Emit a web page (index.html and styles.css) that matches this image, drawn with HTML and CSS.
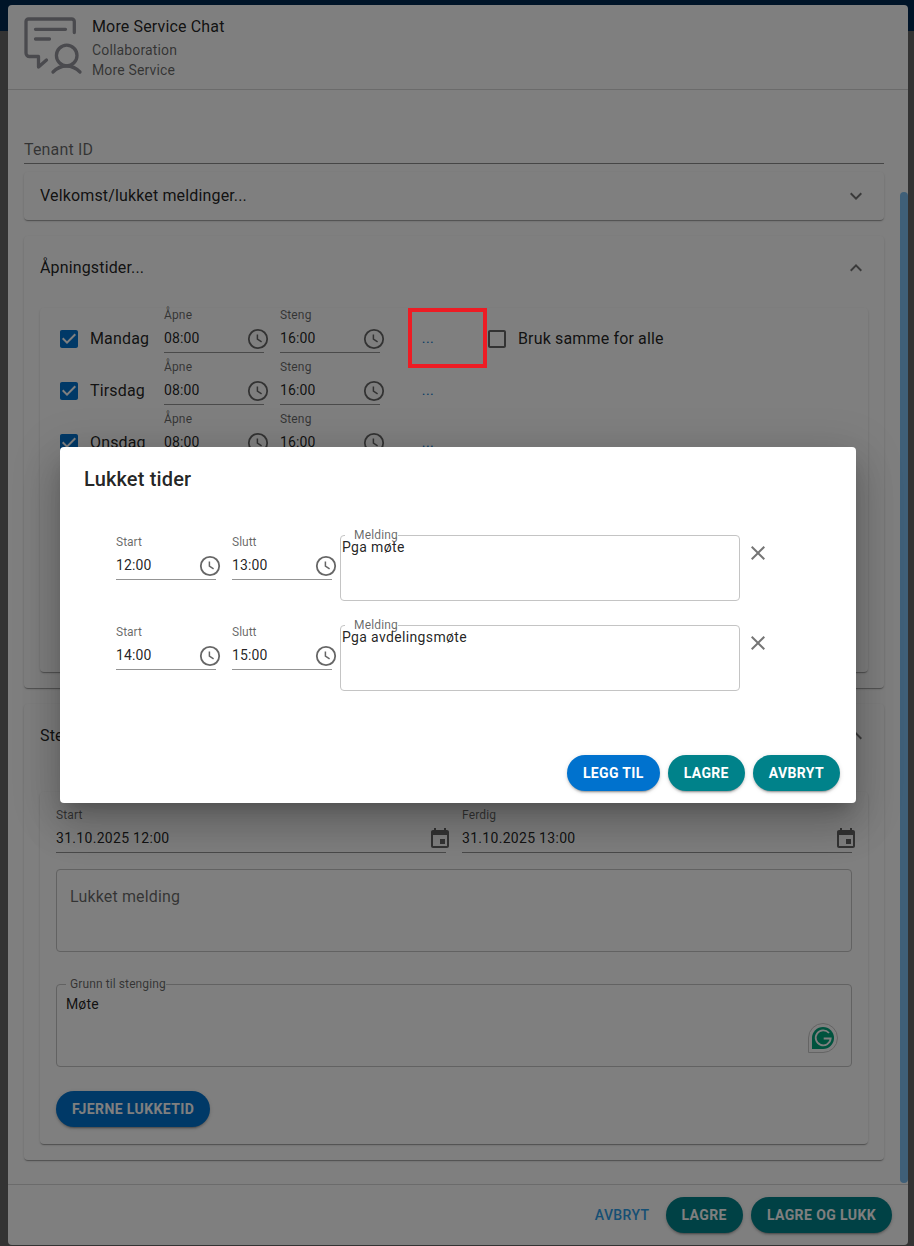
FILE: index.html
```html
<!DOCTYPE html>
<html lang="nb">
<head>
<meta charset="utf-8">
<title>More Service Chat</title>
<link rel="stylesheet" href="styles.css">
</head>
<body>
<svg class="defs" width="0" height="0" aria-hidden="true">
  <symbol id="clock" viewBox="0 0 24 24"><circle cx="12" cy="12" r="9.2" fill="none" stroke="currentColor" stroke-width="1.8"/><path d="M11.4 7.600v4.600l4.200 2.700" fill="none" stroke="currentColor" stroke-width="1.500"/></symbol>
  <symbol id="event" viewBox="0 0 24 24"><path fill="currentColor" d="M17 12h-5v5h5v-5zM16 1v2H8V1H6v2H5c-1.11 0-1.99.9-1.99 2L3 19c0 1.1.89 2 2 2h14c1.1 0 2-.9 2-2V5c0-1.1-.9-2-2-2h-1V1h-2zm3 18H5V8h14v11z"/></symbol>
  <symbol id="checked" viewBox="0 0 24 24"><path fill="currentColor" d="M19 3H5c-1.11 0-2 .9-2 2v14c0 1.1.89 2 2 2h14c1.11 0 2-.9 2-2V5c0-1.1-.89-2-2-2zm-9 14l-5-5 1.41-1.41L10 14.17l7.59-7.59L19 8l-9 9z"/></symbol>
  <symbol id="unchecked" viewBox="0 0 24 24"><path fill="currentColor" d="M19 5v14H5V5h14m0-2H5c-1.1 0-2 .9-2 2v14c0 1.1.9 2 2 2h14c1.1 0 2-.9 2-2V5c0-1.1-.9-2-2-2z"/></symbol>
  <symbol id="more" viewBox="0 0 24 24"><path fill="currentColor" d="M16.59 8.59 12 13.17 7.41 8.59 6 10l6 6 6-6z"/></symbol>
  <symbol id="less" viewBox="0 0 24 24"><path fill="currentColor" d="M12 8l-6 6 1.41 1.41L12 10.83l4.59 4.58L18 14z"/></symbol>
  <symbol id="close" viewBox="0 0 24 24"><path fill="currentColor" d="M19 6.41 17.59 5 12 10.59 6.41 5 5 6.41 10.59 12 5 17.59 6.41 19 12 13.41 17.59 19 19 17.59 13.41 12z"/></symbol>
</svg>

<div class="topbar"></div>

<section class="window">
  <header class="win-head">
    <svg class="logo" width="60" height="60" viewBox="0 0 60 60" fill="none" stroke="currentColor" stroke-width="3.300" stroke-linecap="round" stroke-linejoin="round">
      <path d="M51.300 16.500V5.500a2.500 2.500 0 0 0-2.500-2.500H5.500A2.500 2.500 0 0 0 3 5.500V37a3.500 3.500 0 0 0 3.500 3.500h9V51l8-7"/>
      <path d="M12.500 13.300h30M12.500 23h14"/>
      <circle cx="43.700" cy="39.500" r="10.300"/>
      <path d="M30 56c8-8 19-8 27 0"/>
    </svg>
    <div class="head-text">
      <div class="head-title">More Service Chat</div>
      <div class="head-sub">Collaboration</div>
      <div class="head-sub">More Service</div>
    </div>
  </header>

  <div class="win-body">
    <div class="tenant">Tenant ID</div>

    <div class="acc acc-closed">
      <span class="acc-title">Velkomst/lukket meldinger...</span>
      <svg class="chev"><use href="#more"/></svg>
    </div>

    <div class="acc acc-open">
      <div class="acc-head">
        <span class="acc-title">Åpningstider...</span>
        <svg class="chev"><use href="#less"/></svg>
      </div>
      <div class="card days">
        <div class="day">
          <svg class="box on"><use href="#checked"/></svg>
          <span class="day-name">Mandag</span>
          <div class="field time"><label class="f-label">Åpne</label><div class="f-input"><span class="f-value">08:00</span><svg class="f-icon"><use href="#clock"/></svg></div></div>
          <div class="field time"><label class="f-label">Steng</label><div class="f-input"><span class="f-value">16:00</span><svg class="f-icon"><use href="#clock"/></svg></div></div>
          <button class="dots">...</button>
          <svg class="box off"><use href="#unchecked"/></svg>
          <span class="same">Bruk samme for alle</span>
        </div>
        <div class="day">
          <svg class="box on"><use href="#checked"/></svg>
          <span class="day-name">Tirsdag</span>
          <div class="field time"><label class="f-label">Åpne</label><div class="f-input"><span class="f-value">08:00</span><svg class="f-icon"><use href="#clock"/></svg></div></div>
          <div class="field time"><label class="f-label">Steng</label><div class="f-input"><span class="f-value">16:00</span><svg class="f-icon"><use href="#clock"/></svg></div></div>
          <button class="dots">...</button>
        </div>
        <div class="day">
          <svg class="box on"><use href="#checked"/></svg>
          <span class="day-name">Onsdag</span>
          <div class="field time"><label class="f-label">Åpne</label><div class="f-input"><span class="f-value">08:00</span><svg class="f-icon"><use href="#clock"/></svg></div></div>
          <div class="field time"><label class="f-label">Steng</label><div class="f-input"><span class="f-value">16:00</span><svg class="f-icon"><use href="#clock"/></svg></div></div>
          <button class="dots">...</button>
        </div>
        <div class="day"></div>
        <div class="day"></div>
        <div class="day"></div>
        <div class="day"></div>
      </div>
    </div>

    <div class="acc acc-open acc-last">
      <div class="acc-head">
        <span class="acc-title">Stengt nå...</span>
        <svg class="chev"><use href="#less"/></svg>
      </div>
      <div class="card closing">
        <div class="dates">
          <div class="field date"><label class="f-label">Start</label><div class="f-input"><span class="f-value">31.10.2025 12:00</span><svg class="f-icon dark"><use href="#event"/></svg></div></div>
          <div class="field date"><label class="f-label">Ferdig</label><div class="f-input"><span class="f-value">31.10.2025 13:00</span><svg class="f-icon dark"><use href="#event"/></svg></div></div>
        </div>
        <div class="area area-empty">Lukket melding</div>
        <div class="area area-filled">
          <span class="area-label">Grunn til stenging</span>
          Møte
          <svg class="grammarly" width="30" height="30" viewBox="0 0 30 30">
            <path d="M15 .5a14.500 14.500 0 1 1 0 29H.5V15A14.500 14.500 0 0 1 15 .5z" fill="#fff" stroke="#c8c8c8"/>
            <path d="M15 4a11 11 0 1 1 0 22H4V15A11 11 0 0 1 15 4z" fill="#00a67c"/>
            <path d="M21 10a7.500 7.500 0 1 0 1.700 5.500h-7" fill="none" stroke="#fff" stroke-width="1.800"/>
          </svg>
        </div>
        <button class="btn btn-blue">Fjerne lukketid</button>
      </div>
    </div>
  </div>

  <footer class="win-foot">
    <button class="btn-text">Avbryt</button>
    <button class="btn btn-teal">Lagre</button>
    <button class="btn btn-teal">Lagre og lukk</button>
  </footer>

  <div class="scrollbar"></div>
</section>

<div class="backdrop"></div>

<div class="marker"></div>

<section class="modal">
  <h2 class="modal-title">Lukket tider</h2>
  <div class="modal-rows">
    <div class="m-row">
      <div class="field time"><label class="f-label">Start</label><div class="f-input"><span class="f-value">12:00</span><svg class="f-icon"><use href="#clock"/></svg></div></div>
      <div class="field time"><label class="f-label">Slutt</label><div class="f-input"><span class="f-value">13:00</span><svg class="f-icon"><use href="#clock"/></svg></div></div>
      <div class="m-area"><span class="m-area-label">Melding</span>Pga møte</div>
      <svg class="m-close"><use href="#close"/></svg>
    </div>
    <div class="m-row">
      <div class="field time"><label class="f-label">Start</label><div class="f-input"><span class="f-value">14:00</span><svg class="f-icon"><use href="#clock"/></svg></div></div>
      <div class="field time"><label class="f-label">Slutt</label><div class="f-input"><span class="f-value">15:00</span><svg class="f-icon"><use href="#clock"/></svg></div></div>
      <div class="m-area"><span class="m-area-label">Melding</span>Pga avdelingsmøte</div>
      <svg class="m-close"><use href="#close"/></svg>
    </div>
  </div>
  <div class="modal-actions">
    <button class="btn btn-blue">Legg til</button>
    <button class="btn btn-teal">Lagre</button>
    <button class="btn btn-teal">Avbryt</button>
  </div>
</section>
</body>
</html>
```

FILE: styles.css
```css
* { box-sizing: border-box; }
html, body { margin: 0; height: 1246px; overflow: hidden; }
body {
  position: relative;
  background: #666;
  font-family: Roboto, "Liberation Sans", sans-serif;
  color: rgba(0, 0, 0, 0.87);
  font-size: 16px;
}
.defs { position: absolute; }
.topbar { height: 31px; background: #002850; }

.window {
  position: absolute;
  left: 8px;
  top: 5px;
  width: 900px;
  height: 1240px;
  background: #fff;
  border-radius: 4px;
  display: flex;
  flex-direction: column;
  overflow: hidden;
}
.win-head {
  height: 85px;
  flex: none;
  display: flex;
  padding: 11px 0 0 15px;
  border-bottom: 1px solid #d6d6d6;
}
.logo { color: #94949c; flex: none; }
.head-text { margin-left: 9px; letter-spacing: 0.15px; }
.head-title { font-size: 16px; line-height: 20px; margin: 1px 0 3px; }
.head-sub { font-size: 14px; line-height: 20px; color: rgba(0, 0, 0, 0.6); }

.win-body { flex: 1; padding: 40px 24px 0 16px; overflow: hidden; }
.tenant {
  height: 34px;
  padding-top: 8px;
  line-height: 24px;
  color: rgba(0, 0, 0, 0.6);
  letter-spacing: 0.15px;
  border-bottom: 1px solid #8c8c8c;
}
.acc {
  background: #fff;
  border-radius: 4px;
  box-shadow: 0 2px 1px -1px rgba(0,0,0,.2), 0 1px 1px rgba(0,0,0,.14), 0 1px 3px rgba(0,0,0,.12);
  letter-spacing: 0.15px;
}
.acc-closed {
  margin-top: 8px;
  height: 48px;
  padding: 0 16px;
  display: flex;
  align-items: center;
  justify-content: space-between;
}
.acc-title { margin-bottom: 2px; }
.acc-open { margin-top: 16px; padding: 0 16px 16px; }
.acc-head { height: 64px; display: flex; align-items: center; justify-content: space-between; margin-bottom: 8px; }
.acc-last .acc-head { margin-bottom: 24px; }
.chev { width: 24px; height: 24px; color: rgba(0, 0, 0, 0.54); flex: none; }
.card {
  border-radius: 4px;
  box-shadow: 0 2px 1px -1px rgba(0,0,0,.2), 0 1px 1px rgba(0,0,0,.14), 0 1px 3px rgba(0,0,0,.12);
}

.days { padding-left: 17px; }
.day { height: 52px; display: flex; align-items: flex-start; }
.box { width: 24px; height: 24px; margin-top: 19px; flex: none; }
.box.on { color: #0072ce; }
.box.off { color: rgba(0, 0, 0, 0.6); margin-left: 25px; }
.day-name { width: 74px; margin-left: 9px; margin-top: 19px; line-height: 24px; letter-spacing: 0.15px; }
.same { margin-left: 9px; margin-top: 19px; line-height: 24px; letter-spacing: 0.15px; }
.day .field + .field { margin-left: 16px; }
.dots {
  width: 64px;
  height: 36px;
  margin: 12px 0 0 16px;
  padding: 0;
  border: 0;
  background: none;
  color: #0f78cc;
  font: 400 14px/36px Roboto, sans-serif;
  letter-spacing: 0.4px;
  flex: none;
}

.field { flex: none; height: 45px; }
.time { width: 100px; }
.date { width: 390px; }
.f-label {
  display: block;
  height: 13px;
  padding-top: 1px;
  font-size: 12px;
  line-height: 12px;
  color: rgba(0, 0, 0, 0.6);
}
.f-input {
  margin-top: 5px;
  height: 27px;
  display: flex;
  justify-content: space-between;
  border-bottom: 1px solid rgba(0, 0, 0, 0.42);
}
.f-value { font-size: 14px; line-height: 24px; letter-spacing: 0.15px; }
.date .f-value { letter-spacing: 0.3px; }
.f-icon { width: 24px; height: 24px; margin: 1px -6px 0 0; color: rgba(0, 0, 0, 0.6); flex: none; }
.f-icon.dark { color: rgba(0, 0, 0, 0.6); }

.closing { padding: 16px 16px 17px; }
.dates { display: flex; justify-content: space-between; }
.area {
  position: relative;
  height: 83px;
  border: 1px solid #c4c4c4;
  border-radius: 4px;
}
.area-empty {
  margin-top: 16px;
  padding: 15px 13px;
  line-height: 24px;
  color: rgba(0, 0, 0, 0.6);
}
.area-filled {
  margin-top: 32px;
  padding: 9px;
  font-size: 14px;
  line-height: 20px;
  letter-spacing: 0.15px;
}
.area-label, .m-area-label {
  position: absolute;
  font-size: 12px;
  line-height: 12px;
  color: rgba(0, 0, 0, 0.6);
  background: #fff;
  letter-spacing: 0.15px;
}
.area-label { left: 9px; top: -7px; padding: 0 0 0 4px; letter-spacing: 0.1px; }
.grammarly { position: absolute; right: 13px; top: 38px; }
.btn {
  display: block;
  height: 36px;
  padding: 0 16px;
  border: 0;
  border-radius: 18px;
  color: #fff;
  font: 700 14px/36px Roboto, sans-serif;
  letter-spacing: 0.4px;
  text-transform: uppercase;
  box-shadow: 0 3px 1px -2px rgba(0,0,0,.2), 0 2px 2px rgba(0,0,0,.14), 0 1px 5px rgba(0,0,0,.12);
}
.btn-blue { background: #0072ce; }
.btn-teal { background: #00828a; }
.closing .btn { margin-top: 24px; }

.win-foot {
  height: 61px;
  flex: none;
  display: flex;
  justify-content: flex-end;
  align-items: flex-start;
  gap: 8px;
  padding: 12px 16px 0;
  border-top: 1px solid #d6d6d6;
}
.btn-text {
  height: 36px;
  padding: 0 8px;
  border: 0;
  background: none;
  color: #2c9ee8;
  font: 500 14px/36px Roboto, sans-serif;
  letter-spacing: 0.4px;
  text-transform: uppercase;
}
.scrollbar {
  position: absolute;
  right: 0;
  top: 187px;
  width: 8px;
  height: 991px;
  border-radius: 4px;
  background: #7ebef0;
}

.backdrop { position: absolute; inset: 0; background: rgba(0, 0, 0, 0.5); }
.marker {
  position: absolute;
  left: 408px;
  top: 308px;
  width: 79px;
  height: 60px;
  border: 4px solid #ed1c24;
}

.modal {
  position: absolute;
  left: 60px;
  top: 447px;
  width: 796px;
  height: 356px;
  background: #fff;
  border-radius: 4px;
  box-shadow: 0 11px 15px -7px rgba(0,0,0,.2), 0 24px 38px 3px rgba(0,0,0,.14), 0 9px 46px 8px rgba(0,0,0,.12);
}
.modal-title {
  margin: 0;
  height: 64px;
  padding: 16px 24px;
  font-size: 20px;
  font-weight: 500;
  line-height: 32px;
  letter-spacing: 0.15px;
}
.modal-rows { padding: 24px 0 0 56px; display: flex; flex-direction: column; gap: 24px; }
.m-row { display: flex; align-items: flex-start; }
.m-row .field + .field { margin-left: 16px; }
.m-area {
  position: relative;
  width: 400px;
  height: 66px;
  margin-left: 8px;
  padding: 3px 1px;
  border: 1px solid #c4c4c4;
  border-radius: 4px;
  font-size: 14px;
  line-height: 16px;
  letter-spacing: 0.35px;
}
.m-area-label { left: 4px; top: -7px; padding: 0 0 0 9px; }
.m-close { width: 24px; height: 24px; margin: 6px 0 0 6px; color: rgba(0, 0, 0, 0.54); }
.modal-actions { display: flex; justify-content: flex-end; gap: 8px; padding: 64px 16px 0; }
.modal-actions .btn { letter-spacing: 0.35px; }
```
